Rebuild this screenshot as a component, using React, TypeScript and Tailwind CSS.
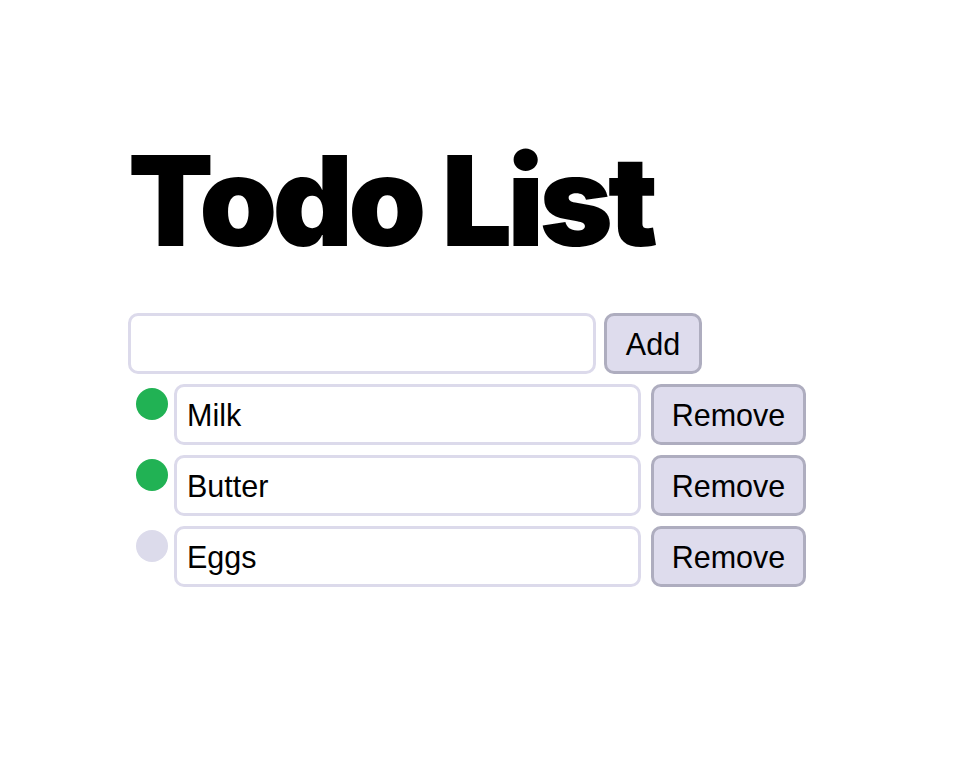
const todos = [
  { id: 1, text: "Milk", done: true },
  { id: 2, text: "Butter", done: true },
  { id: 3, text: "Eggs", done: false },
];

export default function App() {
  return (
    <div className="min-h-screen bg-white pl-[128px] pt-[138px] font-['Liberation_Sans',Arial,sans-serif] text-black">
      <h1 className="font-['Inter',sans-serif] text-[125px] font-black leading-none tracking-[-0.039em]">
        Todo List
      </h1>

      <form className="mt-[50px] flex gap-[8px]" onSubmit={(e) => e.preventDefault()}>
        <input
          type="text"
          className="h-[61px] w-[468px] rounded-[10px] border-[3px] border-[#dcdaeb] px-[11px] pt-[2px] text-[30.5px] outline-none"
        />
        <button className="h-[61px] w-[98px] rounded-[10px] border-[3px] border-[#aeadbf] bg-[#dedced] pt-[2px] text-[30.5px]">
          Add
        </button>
      </form>

      <ul className="mt-[10px] flex flex-col gap-[10px]">
        {todos.map((todo) => (
          <li key={todo.id} className="flex items-start">
            <span
              className={`ml-[8px] mt-[4px] h-[32px] w-[32px] rounded-full ${
                todo.done ? "bg-[#21b254]" : "bg-[#dcdbeb]"
              }`}
            />
            <input
              type="text"
              defaultValue={todo.text}
              className="ml-[6px] h-[61px] w-[467px] rounded-[10px] border-[3px] border-[#dcdaeb] px-[10px] pt-[2px] text-[30.5px] outline-none"
            />
            <button className="ml-[10px] h-[61px] w-[155px] rounded-[10px] border-[3px] border-[#aeadbf] bg-[#dedced] pt-[2px] text-[30.5px]">
              Remove
            </button>
          </li>
        ))}
      </ul>
    </div>
  );
}
